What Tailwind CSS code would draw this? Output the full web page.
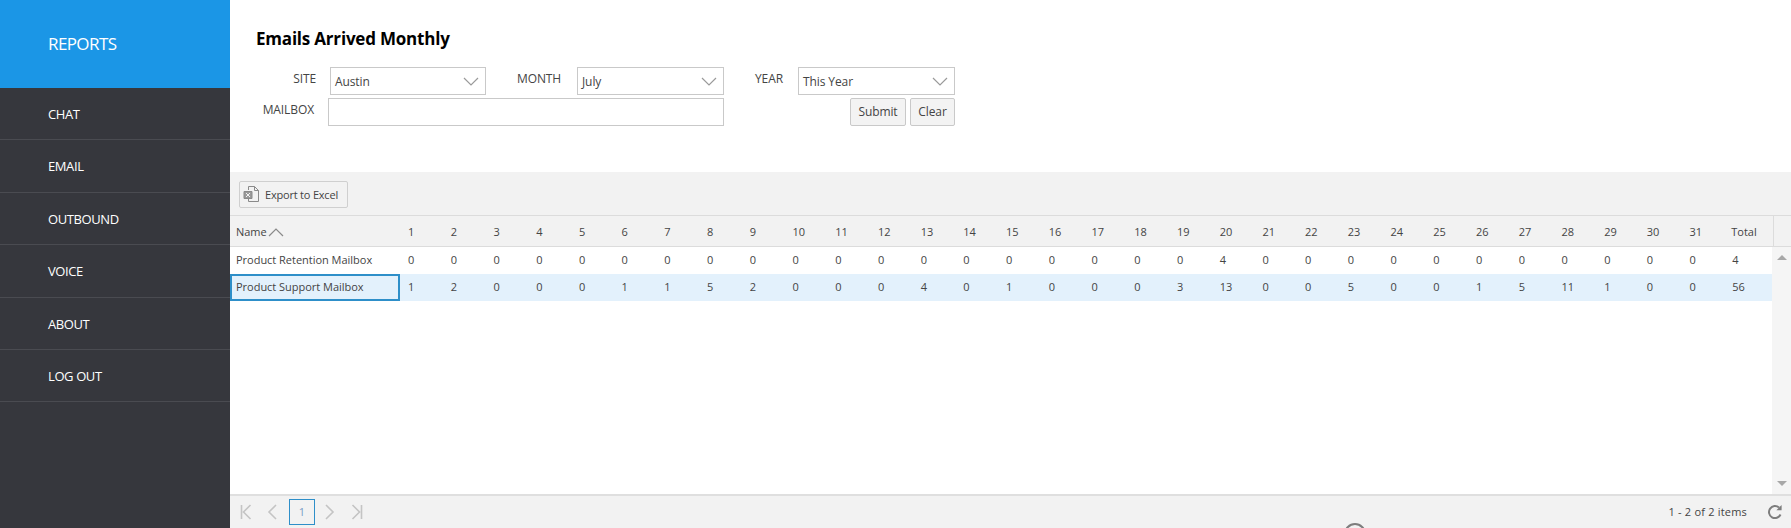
<!DOCTYPE html>
<html><head><meta charset="utf-8"><title>Reports</title>
<script src="https://cdn.jsdelivr.net/npm/@tailwindcss/browser@4"></script></head>
<body class="m-0 overflow-hidden bg-white font-['Open_Sans',sans-serif] text-[#444]">
<div class="relative flex h-[528px] w-[1791px] overflow-hidden">
<aside class="flex w-[230px] shrink-0 flex-col bg-[#36373d] text-[13px] tracking-[-0.4px] text-white">
  <div class="flex h-[88px] shrink-0 items-center bg-[#1b96e6] pb-[1px] pl-[48px] text-[17px] tracking-[-0.6px]">REPORTS</div>
  <a class="flex h-[52.4px] items-center border-b border-[#4a4b51] pl-[48px] pt-[2px]">CHAT</a>
  <a class="flex h-[52.4px] items-center border-b border-[#4a4b51] pl-[48px] pt-[2px]">EMAIL</a>
  <a class="flex h-[52.4px] items-center border-b border-[#4a4b51] pl-[48px] pt-[2px]">OUTBOUND</a>
  <a class="flex h-[52.4px] items-center border-b border-[#4a4b51] pl-[48px] pt-[2px]">VOICE</a>
  <a class="flex h-[52.4px] items-center border-b border-[#4a4b51] pl-[48px] pt-[2px]">ABOUT</a>
  <a class="flex h-[52.4px] items-center border-b border-[#4a4b51] pl-[48px] pt-[2px]">LOG OUT</a>
</aside>
<main class="flex min-w-0 flex-1 flex-col">
  <section class="h-[172px] shrink-0 pl-[26px] pt-[27px] text-[12px] tracking-[-0.1px]">
    <h1 class="h-[24px] text-[17px] font-bold leading-[24px] tracking-[-0.2px] text-black">Emails Arrived Monthly</h1>
    <div class="mt-[16px] flex h-[28px] items-start">
      <label class="w-[60px] pt-[3px] text-right">SITE</label>
      <div class="ml-[14px] flex h-[28px] w-[156px] items-center justify-between border border-[#c9c9c9] pl-[4px] pr-[6px]"><span class="pt-[2px]">Austin</span><svg width="16" height="9" viewBox="0 0 16 9" fill="none" stroke="#9a9a9a" stroke-width="1.2"><path d="M1 1l7 7 7-7"/></svg></div>
      <label class="ml-[31px] w-[47px] pt-[3px]">MONTH</label>
      <div class="ml-[13px] flex h-[28px] w-[147px] items-center justify-between border border-[#c9c9c9] pl-[4px] pr-[6px]"><span class="pt-[2px]">July</span><svg width="16" height="9" viewBox="0 0 16 9" fill="none" stroke="#9a9a9a" stroke-width="1.2"><path d="M1 1l7 7 7-7"/></svg></div>
      <label class="ml-[31px] w-[31px] pt-[3px]">YEAR</label>
      <div class="ml-[12px] flex h-[28px] w-[157px] items-center justify-between border border-[#c9c9c9] pl-[4px] pr-[6px]"><span class="pt-[2px]">This Year</span><svg width="16" height="9" viewBox="0 0 16 9" fill="none" stroke="#9a9a9a" stroke-width="1.2"><path d="M1 1l7 7 7-7"/></svg></div>
    </div>
    <div class="mt-[3px] flex h-[28px] items-start">
      <label class="w-[58px] pt-[3px] text-right">MAILBOX</label>
      <div class="ml-[14px] h-[28px] w-[396px] border border-[#c9c9c9]"></div>
      <button class="ml-[126px] h-[28px] w-[56px] rounded-[2px] border border-[#c9c9c9] bg-[#f3f3f3]">Submit</button>
      <button class="ml-[4px] h-[28px] w-[45px] rounded-[2px] border border-[#c9c9c9] bg-[#f3f3f3]">Clear</button>
    </div>
  </section>
  <section class="flex min-h-0 flex-1 flex-col text-[11px] tracking-[-0.02px]">
    <div class="flex h-[44px] shrink-0 items-center border-b border-[#dcdcdc] bg-[#f2f2f2] pl-[9px] pt-[1px]">
      <button class="flex h-[27px] w-[109px] items-center gap-[5px] rounded-[2px] border border-[#cfcfcf] pl-[3px] tracking-[-0.2px]">
        <svg width="17" height="18" viewBox="0 0 17 18" fill="none" stroke="#8a8a8a"><path d="M5.5 5V1.5h6l4 4v11h-10V14"/><path d="M11.5 1.5v4h4"/><path d="M1 6.5h8v7H1z" fill="#9a9a9a"/><path d="M3 8l4 4M7 8l-4 4" stroke="#f2f2f2"/></svg>
        <span class="pt-[2px]">Export to Excel</span>
      </button>
    </div>
    <div class="grid min-h-0 flex-1 grid-cols-[170px_repeat(31,42.72px)_48.68px_19px] content-start">
      <div class="flex h-[31px] items-center border-b border-[#dcdcdc] bg-[#f2f2f2] pl-[6px] pt-[2px]">Name<svg class="ml-[1px]" width="16" height="9" viewBox="0 0 16 9" fill="none" stroke="#8a8a8a" stroke-width="1.2"><path d="M1 8l7-7 7 7"/></svg></div>
      <div class="flex h-[31px] items-center border-b border-[#dcdcdc] bg-[#f2f2f2] pl-[8px] pt-[2px]">1</div><div class="flex h-[31px] items-center border-b border-[#dcdcdc] bg-[#f2f2f2] pl-[8px] pt-[2px]">2</div><div class="flex h-[31px] items-center border-b border-[#dcdcdc] bg-[#f2f2f2] pl-[8px] pt-[2px]">3</div><div class="flex h-[31px] items-center border-b border-[#dcdcdc] bg-[#f2f2f2] pl-[8px] pt-[2px]">4</div><div class="flex h-[31px] items-center border-b border-[#dcdcdc] bg-[#f2f2f2] pl-[8px] pt-[2px]">5</div><div class="flex h-[31px] items-center border-b border-[#dcdcdc] bg-[#f2f2f2] pl-[8px] pt-[2px]">6</div><div class="flex h-[31px] items-center border-b border-[#dcdcdc] bg-[#f2f2f2] pl-[8px] pt-[2px]">7</div><div class="flex h-[31px] items-center border-b border-[#dcdcdc] bg-[#f2f2f2] pl-[8px] pt-[2px]">8</div><div class="flex h-[31px] items-center border-b border-[#dcdcdc] bg-[#f2f2f2] pl-[8px] pt-[2px]">9</div>
      <div class="flex h-[31px] items-center border-b border-[#dcdcdc] bg-[#f2f2f2] pl-[8px] pt-[2px]">10</div><div class="flex h-[31px] items-center border-b border-[#dcdcdc] bg-[#f2f2f2] pl-[8px] pt-[2px]">11</div><div class="flex h-[31px] items-center border-b border-[#dcdcdc] bg-[#f2f2f2] pl-[8px] pt-[2px]">12</div><div class="flex h-[31px] items-center border-b border-[#dcdcdc] bg-[#f2f2f2] pl-[8px] pt-[2px]">13</div><div class="flex h-[31px] items-center border-b border-[#dcdcdc] bg-[#f2f2f2] pl-[8px] pt-[2px]">14</div><div class="flex h-[31px] items-center border-b border-[#dcdcdc] bg-[#f2f2f2] pl-[8px] pt-[2px]">15</div><div class="flex h-[31px] items-center border-b border-[#dcdcdc] bg-[#f2f2f2] pl-[8px] pt-[2px]">16</div><div class="flex h-[31px] items-center border-b border-[#dcdcdc] bg-[#f2f2f2] pl-[8px] pt-[2px]">17</div><div class="flex h-[31px] items-center border-b border-[#dcdcdc] bg-[#f2f2f2] pl-[8px] pt-[2px]">18</div><div class="flex h-[31px] items-center border-b border-[#dcdcdc] bg-[#f2f2f2] pl-[8px] pt-[2px]">19</div>
      <div class="flex h-[31px] items-center border-b border-[#dcdcdc] bg-[#f2f2f2] pl-[8px] pt-[2px]">20</div><div class="flex h-[31px] items-center border-b border-[#dcdcdc] bg-[#f2f2f2] pl-[8px] pt-[2px]">21</div><div class="flex h-[31px] items-center border-b border-[#dcdcdc] bg-[#f2f2f2] pl-[8px] pt-[2px]">22</div><div class="flex h-[31px] items-center border-b border-[#dcdcdc] bg-[#f2f2f2] pl-[8px] pt-[2px]">23</div><div class="flex h-[31px] items-center border-b border-[#dcdcdc] bg-[#f2f2f2] pl-[8px] pt-[2px]">24</div><div class="flex h-[31px] items-center border-b border-[#dcdcdc] bg-[#f2f2f2] pl-[8px] pt-[2px]">25</div><div class="flex h-[31px] items-center border-b border-[#dcdcdc] bg-[#f2f2f2] pl-[8px] pt-[2px]">26</div><div class="flex h-[31px] items-center border-b border-[#dcdcdc] bg-[#f2f2f2] pl-[8px] pt-[2px]">27</div><div class="flex h-[31px] items-center border-b border-[#dcdcdc] bg-[#f2f2f2] pl-[8px] pt-[2px]">28</div><div class="flex h-[31px] items-center border-b border-[#dcdcdc] bg-[#f2f2f2] pl-[8px] pt-[2px]">29</div>
      <div class="flex h-[31px] items-center border-b border-[#dcdcdc] bg-[#f2f2f2] pl-[8px] pt-[2px]">30</div><div class="flex h-[31px] items-center border-b border-[#dcdcdc] bg-[#f2f2f2] pl-[8px] pt-[2px]">31</div><div class="flex h-[31px] items-center border-b border-[#dcdcdc] bg-[#f2f2f2] pl-[7px] pt-[2px]">Total</div>
      <div class="h-[31px] border-b border-l border-[#dcdcdc] bg-[#f2f2f2]"></div>

      <div class="flex h-[27px] items-center pl-[6px]">Product Retention Mailbox</div>
      <div class="flex h-[27px] items-center pl-[8px]">0</div><div class="flex h-[27px] items-center pl-[8px]">0</div><div class="flex h-[27px] items-center pl-[8px]">0</div><div class="flex h-[27px] items-center pl-[8px]">0</div><div class="flex h-[27px] items-center pl-[8px]">0</div><div class="flex h-[27px] items-center pl-[8px]">0</div><div class="flex h-[27px] items-center pl-[8px]">0</div><div class="flex h-[27px] items-center pl-[8px]">0</div><div class="flex h-[27px] items-center pl-[8px]">0</div><div class="flex h-[27px] items-center pl-[8px]">0</div><div class="flex h-[27px] items-center pl-[8px]">0</div><div class="flex h-[27px] items-center pl-[8px]">0</div><div class="flex h-[27px] items-center pl-[8px]">0</div><div class="flex h-[27px] items-center pl-[8px]">0</div><div class="flex h-[27px] items-center pl-[8px]">0</div><div class="flex h-[27px] items-center pl-[8px]">0</div><div class="flex h-[27px] items-center pl-[8px]">0</div><div class="flex h-[27px] items-center pl-[8px]">0</div><div class="flex h-[27px] items-center pl-[8px]">0</div>
      <div class="flex h-[27px] items-center pl-[8px]">4</div><div class="flex h-[27px] items-center pl-[8px]">0</div><div class="flex h-[27px] items-center pl-[8px]">0</div><div class="flex h-[27px] items-center pl-[8px]">0</div><div class="flex h-[27px] items-center pl-[8px]">0</div><div class="flex h-[27px] items-center pl-[8px]">0</div><div class="flex h-[27px] items-center pl-[8px]">0</div><div class="flex h-[27px] items-center pl-[8px]">0</div><div class="flex h-[27px] items-center pl-[8px]">0</div><div class="flex h-[27px] items-center pl-[8px]">0</div><div class="flex h-[27px] items-center pl-[8px]">0</div><div class="flex h-[27px] items-center pl-[8px]">0</div>
      <div class="flex h-[27px] items-center pl-[8px]">4</div>
      <div class="h-[27px]"></div>

      <div class="flex h-[27px] items-center border-2 border-[#2e8fc9] bg-[#e3f1fc] pl-[4px]">Product Support Mailbox</div>
      <div class="flex h-[27px] items-center bg-[#e3f1fc] pl-[8px]">1</div><div class="flex h-[27px] items-center bg-[#e3f1fc] pl-[8px]">2</div><div class="flex h-[27px] items-center bg-[#e3f1fc] pl-[8px]">0</div><div class="flex h-[27px] items-center bg-[#e3f1fc] pl-[8px]">0</div><div class="flex h-[27px] items-center bg-[#e3f1fc] pl-[8px]">0</div><div class="flex h-[27px] items-center bg-[#e3f1fc] pl-[8px]">1</div><div class="flex h-[27px] items-center bg-[#e3f1fc] pl-[8px]">1</div><div class="flex h-[27px] items-center bg-[#e3f1fc] pl-[8px]">5</div><div class="flex h-[27px] items-center bg-[#e3f1fc] pl-[8px]">2</div><div class="flex h-[27px] items-center bg-[#e3f1fc] pl-[8px]">0</div><div class="flex h-[27px] items-center bg-[#e3f1fc] pl-[8px]">0</div><div class="flex h-[27px] items-center bg-[#e3f1fc] pl-[8px]">0</div><div class="flex h-[27px] items-center bg-[#e3f1fc] pl-[8px]">4</div><div class="flex h-[27px] items-center bg-[#e3f1fc] pl-[8px]">0</div><div class="flex h-[27px] items-center bg-[#e3f1fc] pl-[8px]">1</div><div class="flex h-[27px] items-center bg-[#e3f1fc] pl-[8px]">0</div><div class="flex h-[27px] items-center bg-[#e3f1fc] pl-[8px]">0</div><div class="flex h-[27px] items-center bg-[#e3f1fc] pl-[8px]">0</div><div class="flex h-[27px] items-center bg-[#e3f1fc] pl-[8px]">3</div>
      <div class="flex h-[27px] items-center bg-[#e3f1fc] pl-[8px]">13</div><div class="flex h-[27px] items-center bg-[#e3f1fc] pl-[8px]">0</div><div class="flex h-[27px] items-center bg-[#e3f1fc] pl-[8px]">0</div><div class="flex h-[27px] items-center bg-[#e3f1fc] pl-[8px]">5</div><div class="flex h-[27px] items-center bg-[#e3f1fc] pl-[8px]">0</div><div class="flex h-[27px] items-center bg-[#e3f1fc] pl-[8px]">0</div><div class="flex h-[27px] items-center bg-[#e3f1fc] pl-[8px]">1</div><div class="flex h-[27px] items-center bg-[#e3f1fc] pl-[8px]">5</div><div class="flex h-[27px] items-center bg-[#e3f1fc] pl-[8px]">11</div><div class="flex h-[27px] items-center bg-[#e3f1fc] pl-[8px]">1</div><div class="flex h-[27px] items-center bg-[#e3f1fc] pl-[8px]">0</div><div class="flex h-[27px] items-center bg-[#e3f1fc] pl-[8px]">0</div>
      <div class="flex h-[27px] items-center bg-[#e3f1fc] pl-[8px]">56</div>
      <div class="h-[27px]"></div>
    </div>
    <div class="flex h-[34px] shrink-0 items-center border-t-2 border-[#dfdfdf] bg-[#f2f2f2]">
      <svg class="ml-[10px]" width="12" height="16" viewBox="0 0 12 16" fill="none" stroke="#c4c4c4" stroke-width="1.6"><path d="M1.5 1v14M10.5 1l-7 7 7 7"/></svg>
      <svg class="ml-[15px]" width="10" height="16" viewBox="0 0 10 16" fill="none" stroke="#c4c4c4" stroke-width="1.6"><path d="M9 1L2 8l7 7"/></svg>
      <div class="ml-[12px] flex h-[26px] w-[26px] items-center justify-center border border-[#2e8fc9] text-[#7a9cc6]">1</div>
      <svg class="ml-[10px]" width="10" height="16" viewBox="0 0 10 16" fill="none" stroke="#c4c4c4" stroke-width="1.6"><path d="M1 1l7 7-7 7"/></svg>
      <svg class="ml-[16px]" width="12" height="16" viewBox="0 0 12 16" fill="none" stroke="#c4c4c4" stroke-width="1.6"><path d="M1.5 1l7 7-7 7M10.5 1v14"/></svg>
      <span class="ml-auto mr-[20px] tracking-[0.2px]">1 - 2 of 2 items</span>
      <svg class="mr-[8px]" width="16" height="16" viewBox="0 0 16 16" fill="none" stroke="#7d7d7d" stroke-width="2"><path d="M13.5 10.5A6 6 0 1 1 12 3.6"/><path d="M14.6 1v5.2H9.4z" fill="#7d7d7d" stroke="none"/></svg>
    </div>
  </section>
</main>
<div class="absolute bottom-[34px] right-0 top-[247px] flex w-[19px] flex-col items-center justify-between bg-[#f5f5f5] py-[8px]">
  <span class="h-0 w-0 border-x-[5px] border-b-[5px] border-x-transparent border-b-[#a8a8a8]"></span>
  <span class="h-0 w-0 border-x-[5px] border-t-[5px] border-x-transparent border-t-[#a8a8a8]"></span>
</div>
<div class="absolute left-[1344px] top-[523px] h-[22px] w-[22px] rounded-full border-2 border-[#7d7d7d]"></div>
</div>
</body></html>
